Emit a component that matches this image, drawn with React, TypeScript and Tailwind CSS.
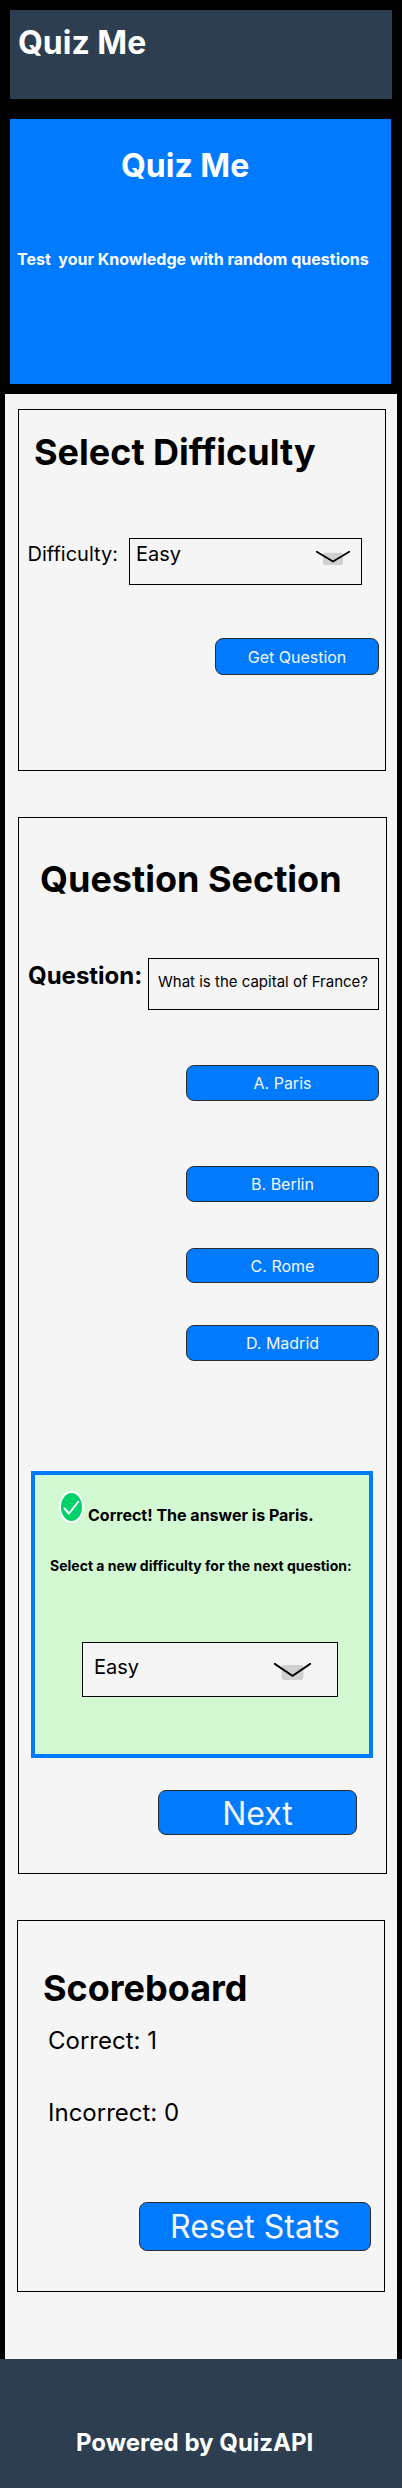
import React from "react";

function Chevron({ className }: { className: string }) {
  return (
    <svg className={className} viewBox="0 0 34 14" preserveAspectRatio="none" fill="none">
      <rect x="7" y="1.7" width="20" height="12.3" rx="2" fill="#d0d0d0" />
      <path d="M0.7 0.7 L17 10.6 L33.3 0.7" stroke="#000" strokeWidth="1.7" strokeLinecap="round" strokeLinejoin="round" />
    </svg>
  );
}

function CheckIcon() {
  return (
    <svg className="mt-[16px] h-[32px] w-[25px] shrink-0" viewBox="0 0 25 32" fill="none">
      <ellipse cx="12.5" cy="16" rx="11.5" ry="15" fill="#00d26a" stroke="#fff" strokeWidth="2" />
      <path d="M5.5 17.5 L10 22.5 L19.3 10.7" stroke="#fff" strokeWidth="2" strokeLinecap="round" strokeLinejoin="round" />
    </svg>
  );
}

function Button({ className, children }: { className: string; children: React.ReactNode }) {
  return (
    <button className={`block rounded-lg border border-[#2c2c2c] bg-[#007bff] text-center text-[#f5f5f5] ${className}`}>
      {children}
    </button>
  );
}

export default function App() {
  return (
    <div className="flex h-[2488px] w-[402px] flex-col bg-black font-['Inter',sans-serif] text-black">
      <header className="mx-[10px] mt-[10px] h-[89px] w-[382px] bg-[#2c3e50] pt-[13px] pl-[8px]">
        <h1 className="text-[32px] leading-[39px] font-bold text-white">Quiz Me</h1>
      </header>

      <section className="mt-[20px] ml-[10px] h-[265px] w-[381px] bg-[#007bff] pt-[27px] font-bold text-white">
        <h2 className="ml-[111px] text-[32px] leading-[39px]">Quiz Me</h2>
        <p className="mt-[64px] ml-[7px] text-[16px] leading-[20px] whitespace-pre">Test  your Knowledge with random questions</p>
      </section>

      <main className="mx-[5px] mt-[10px] h-[1965px] bg-[#f5f5f5] pt-[15px]">
        <section className="ml-[13px] h-[362px] w-[368px] border border-black pt-[20px]">
          <h2 className="ml-[15px] text-[36px] leading-[44px] font-bold">Select Difficulty</h2>
          <div className="mt-[64px] flex">
            <label className="mt-[4px] ml-[8.5px] w-[101.5px] text-[20px] leading-[24px]">Difficulty:</label>
            <div className="flex h-[47px] w-[233px] justify-between border border-black pr-[11px] pl-[6px]">
              <span className="mt-[3px] text-[20px] leading-[24px]">Easy</span>
              <Chevron className="mt-[12px] h-[14px] w-[34px]" />
            </div>
          </div>
          <Button className="mt-[53px] ml-[196px] h-[37px] w-[164px] text-[16px] leading-[20px]">Get Question</Button>
        </section>

        <section className="mt-[46px] ml-[13px] h-[1057px] w-[369px] border border-black pt-[39px]">
          <h2 className="ml-[21px] text-[36px] leading-[44px] font-bold">Question Section</h2>
          <div className="mt-[57px] flex">
            <span className="mt-[3px] ml-[9px] w-[120px] text-[24px] leading-[29px] font-bold">Question:</span>
            <p className="h-[52px] w-[231px] border border-black pt-[14px] pl-[9px] text-[15px] leading-[18px] whitespace-nowrap">
              What is the capital of France?
            </p>
          </div>
          <div className="mt-[55px] ml-[167px] flex w-[193px] flex-col text-[16px] leading-[20px]">
            <Button className="h-[36px]">A. Paris</Button>
            <Button className="mt-[65px] h-[36px]">B. Berlin</Button>
            <Button className="mt-[46px] h-[35px]">C. Rome</Button>
            <Button className="mt-[42px] h-[36px]">D. Madrid</Button>
          </div>
          <div className="mt-[110px] ml-[12px] h-[287px] w-[342px] border-4 border-[#007bff] bg-[#d3f9d3]">
            <div className="flex pl-[24px]">
              <CheckIcon />
              <p className="mt-[30px] ml-[4px] text-[16px] leading-[20px] font-bold whitespace-nowrap">Correct! The answer is Paris.</p>
            </div>
            <p className="mt-[32px] ml-[15px] text-[14px] leading-[17px] font-bold whitespace-nowrap">
              Select a new difficulty for the next question:
            </p>
            <div className="mt-[68px] ml-[47px] flex h-[55px] w-[256px] justify-between border border-black bg-[#f5f5f5] pr-[26px] pl-[11px]">
              <span className="mt-[12px] text-[20px] leading-[24px]">Easy</span>
              <Chevron className="mt-[20px] h-[17px] w-[37px]" />
            </div>
          </div>
          <Button className="mt-[32px] ml-[139px] h-[45px] w-[199px] pt-[2px] text-[32px] leading-[39px]">Next</Button>
        </section>

        <section className="mt-[46px] ml-[12px] h-[372px] w-[368px] border border-black pt-[45px]">
          <h2 className="ml-[25px] text-[36px] leading-[44px] font-bold">Scoreboard</h2>
          <p className="mt-[16px] ml-[30px] text-[24px] leading-[29px]">Correct: 1</p>
          <p className="mt-[43px] ml-[30px] text-[24px] leading-[29px]">Incorrect: 0</p>
          <Button className="mt-[75px] ml-[121px] h-[49px] w-[232px] text-[32px] leading-[39px]">Reset Stats</Button>
        </section>
      </main>

      <footer className="h-[129px] bg-[#2c3e50] pt-[69px]">
        <p className="ml-[76px] text-[24px] leading-[29px] font-bold text-white">Powered by QuizAPI</p>
      </footer>
    </div>
  );
}
